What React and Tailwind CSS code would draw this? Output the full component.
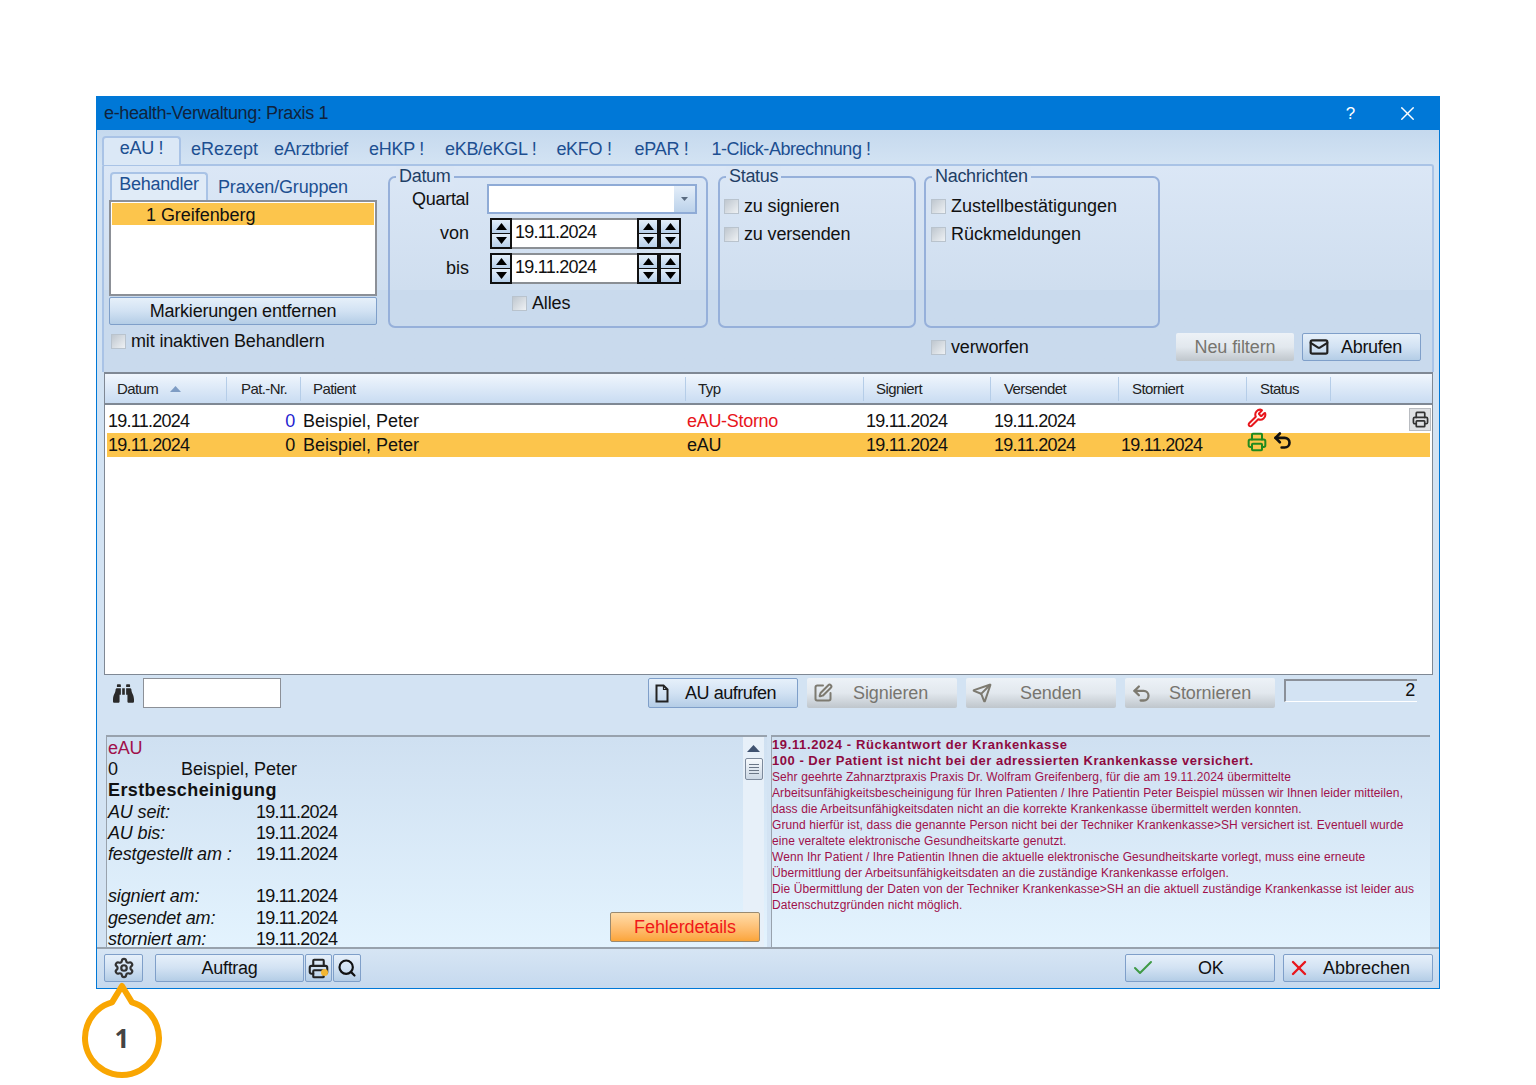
import { Settings, Printer, Search, Check, X, Mail, SquarePen, Send, Undo2, Wrench } from "lucide-react";
import { FaBinoculars } from "react-icons/fa";

const btn =
  "flex items-center border border-[#7f9fc9] rounded-[2px] bg-gradient-to-b from-[#e6f0fa] via-[#d2e2f3] to-[#b4cde6] text-[#111]";
const btnOff =
  "flex items-center rounded-[2px] bg-gradient-to-b from-[#edf2f7] via-[#e2e8ee] to-[#bfc6cc] text-[#77756f] tracking-[-0.1px]";
const date = "tracking-[-0.75px]";

const topTabs = [
  { label: "eRezept", cls: "ml-[10px] tracking-[0px]" },
  { label: "eArztbrief", cls: "ml-[16px]" },
  { label: "eHKP !", cls: "ml-[21px]" },
  { label: "eKB/eKGL !", cls: "ml-[21px]" },
  { label: "eKFO !", cls: "ml-[20px]" },
  { label: "ePAR !", cls: "ml-[23px]" },
  { label: "1-Click-Abrechnung !", cls: "ml-[23px] tracking-[-0.45px]" },
];

const header = [
  { label: "Datum", cls: "pl-[12px]", sort: true },
  { label: "Pat.-Nr.", cls: "pl-[14px]" },
  { label: "Patient", cls: "pl-[12px]" },
  { label: "Typ", cls: "pl-[12px]" },
  { label: "Signiert", cls: "pl-[12px]" },
  { label: "Versendet", cls: "pl-[13px]" },
  { label: "Storniert", cls: "pl-[13px]" },
  { label: "Status", cls: "pl-[13px]" },
];

const tableCols = "grid-cols-[122px_74px_385px_178px_127px_128px_128px_84px_1fr]";
const rowCols = "grid-cols-[119px_74px_385px_178px_127px_128px_128px_1fr]";

const infoRows = [
  ["AU seit:", "19.11.2024"],
  ["AU bis:", "19.11.2024"],
  ["festgestellt am :", "19.11.2024"],
  null,
  ["signiert am:", "19.11.2024"],
  ["gesendet am:", "19.11.2024"],
  ["storniert am:", "19.11.2024"],
];

const message = [
  "Sehr geehrte Zahnarztpraxis Praxis Dr. Wolfram Greifenberg, für die am 19.11.2024 übermittelte",
  "Arbeitsunfähigkeitsbescheinigung für Ihren Patienten / Ihre Patientin Peter Beispiel müssen wir Ihnen leider mitteilen,",
  "dass die Arbeitsunfähigkeitsdaten nicht an die korrekte Krankenkasse übermittelt werden konnten.",
  "Grund hierfür ist, dass die genannte Person nicht bei der Techniker Krankenkasse>SH versichert ist. Eventuell wurde",
  "eine veraltete elektronische Gesundheitskarte genutzt.",
  "Wenn Ihr Patient / Ihre Patientin Ihnen die aktuelle elektronische Gesundheitskarte vorlegt, muss eine erneute",
  "Übermittlung der Arbeitsunfähigkeitsdaten an die zuständige Krankenkasse erfolgen.",
  "Die Übermittlung der Daten von der Techniker Krankenkasse>SH an die aktuell zuständige Krankenkasse ist leider aus",
  "Datenschutzgründen nicht möglich.",
];

function Checkbox({ label, className = "" }) {
  return (
    <div className={`flex items-center h-[20px] text-[#111] tracking-[-0.15px] ${className}`}>
      <span className="w-[15px] h-[15px] border border-[#b9c3cd] bg-gradient-to-br from-[#bfc7cf] to-[#eef1f4] mr-[5px] shrink-0" />
      <span className="whitespace-nowrap">{label}</span>
    </div>
  );
}

function Triangle({ down }) {
  return (
    <svg width="11" height="7" viewBox="0 0 11 7">
      <path d={down ? "M0 0h11L5.5 7z" : "M0 7h11L5.5 0z"} fill="#000" />
    </svg>
  );
}

function Spin() {
  return (
    <div className="w-[22px] h-[31px] border-2 border-[#111] flex flex-col bg-[#111] gap-[1px] shrink-0">
      <div className="flex-1 bg-gradient-to-b from-[#e4effa] to-[#b8d0ea] flex items-center justify-center">
        <Triangle />
      </div>
      <div className="flex-1 bg-gradient-to-b from-[#e4effa] to-[#b8d0ea] flex items-center justify-center">
        <Triangle down />
      </div>
    </div>
  );
}

function DateRow({ label, className = "" }) {
  return (
    <div className={`flex items-center h-[31px] ${className}`}>
      <div className="w-[79px] text-right text-[#111] tracking-[0px]">{label}</div>
      <div className="ml-[21px] flex items-center">
        <Spin />
        <div className={`w-[125px] h-[31px] bg-white border-y-2 border-[#8b8f94] pl-[3px] leading-[25px] text-[#111] ${date}`}>
          19.11.2024
        </div>
        <Spin />
        <Spin />
      </div>
    </div>
  );
}

function Group({ title, className = "", children }) {
  return (
    <div className={`relative h-[152px] border-2 border-[#96b0da] rounded-[7px] shrink-0 ${className}`}>
      <div className="absolute left-[6px] top-[-12px] h-[20px] leading-[20px] px-[3px] bg-[#dae6f5] text-[#1f3f66]">
        {title}
      </div>
      {children}
    </div>
  );
}

function DocIcon() {
  return (
    <svg width="16" height="19" viewBox="0 0 16 19" fill="none" stroke="#222" strokeWidth="2">
      <path d="M2.5 1.5h7l4 4v12h-11z" />
      <path d="M9.5 1.5v4h4" strokeWidth="1.2" />
    </svg>
  );
}

export default function App() {
  return (
    <div className="relative w-[1536px] h-[1085px] bg-white pt-[96px] pl-[96px] overflow-hidden font-['Liberation_Sans',Arial,sans-serif] text-[18px] tracking-[-0.3px]">
      <div className="w-[1344px] h-[893px] flex flex-col border border-[#0078d7] bg-[#d3e3f3]">
        {/* titlebar */}
        <div className="h-[33px] shrink-0 bg-[#0078d7] flex items-center pl-[7px] text-[#10233c]">
          <span className="tracking-[-0.38px]">e-health-Verwaltung: Praxis 1</span>
          <span className="ml-auto text-white text-[17px]">?</span>
          <X className="ml-[41px] mr-[20px] text-white" size={23} strokeWidth={1.4} />
        </div>

        {/* tabs */}
        <div className="h-[34px] shrink-0 flex items-end pl-[5px] bg-gradient-to-b from-[#c5d9ee] to-[#d3e3f3] text-[#1d4f91]">
          <div className="w-[79px] h-[29px] border-x-2 border-t-2 border-[#a9c3e6] rounded-t-[4px] bg-[#dbe8f6] text-center leading-[20px] relative top-[1px] z-10">
            eAU !
          </div>
          {topTabs.map((t) => (
            <div key={t.label} className={`h-[29px] leading-[29px] whitespace-nowrap ${t.cls}`}>
              {t.label}
            </div>
          ))}
        </div>

        {/* filter panel */}
        <div className="h-[208px] shrink-0 ml-[5px] w-[1332px] flex border-t-2 border-x-2 border-[#a9c3e6] rounded-t-[3px] bg-gradient-to-b from-[#dbe7f6] from-0% via-[#cfdeef] via-60% to-[#c9daed] to-60% bg-[#c9daed]">
          <div className="w-[268px] ml-[5px] pt-[6px] shrink-0">
            <div className="flex h-[28px] items-end">
              <div className="ml-[1px] w-[98px] h-[28px] border-x-2 border-t-2 border-[#a9c3e6] rounded-t-[4px] bg-[#e0ebf7] text-[#1d4f91] text-center leading-[21px]">
                Behandler
              </div>
              <div className="ml-[10px] h-[26px] leading-[27px] text-[#1d4f91] tracking-[-0.15px]">Praxen/Gruppen</div>
            </div>
            <div className="h-[96px] bg-white border-2 border-[#8c9097] p-[1px]">
              <div className="h-[22px] bg-[#fcc54c] pl-[34px] leading-[24px] text-[#111] tracking-[-0.05px]">1 Greifenberg</div>
            </div>
            <div className={`${btn} mt-[1px] h-[28px] justify-center tracking-[-0.2px]`}>Markierungen entfernen</div>
            <Checkbox label="mit inaktiven Behandlern" className="mt-[6px] ml-[2px]" />
          </div>

          <div className="ml-[11px] w-[1033px] pt-[10px]">
            <div className="flex">
              <Group title="Datum" className="w-[320px]">
                <div className="pt-[6px]">
                  <div className="flex items-center h-[30px]">
                    <div className="w-[79px] text-right text-[#111]">Quartal</div>
                    <div className="ml-[18px] w-[210px] h-[30px] bg-white border-2 border-[#8fabd6] flex justify-end">
                      <div className="w-[21px] bg-gradient-to-b from-[#e4eef9] to-[#bcd2ea] flex items-center justify-center">
                        <svg width="7" height="4" viewBox="0 0 7 4">
                          <path d="M0 0h7L3.5 4z" fill="#5a6b80" />
                        </svg>
                      </div>
                    </div>
                  </div>
                  <DateRow label="von" className="mt-[4px]" />
                  <DateRow label="bis" className="mt-[4px]" />
                  <Checkbox label="Alles" className="mt-[9px] ml-[122px]" />
                </div>
              </Group>
              <Group title="Status" className="w-[198px] ml-[10px]">
                <div className="pt-[18px] pl-[4px]">
                  <Checkbox label="zu signieren" />
                  <Checkbox label="zu versenden" className="mt-[8px]" />
                </div>
              </Group>
              <Group title="Nachrichten" className="w-[236px] ml-[8px]">
                <div className="pt-[18px] pl-[5px]">
                  <Checkbox label="Zustellbestätigungen" className="tracking-[0px]" />
                  <Checkbox label="Rückmeldungen" className="mt-[8px] tracking-[0px]" />
                </div>
              </Group>
            </div>
            <div className="flex items-center mt-[5px] h-[28px]">
              <Checkbox label="verworfen" className="ml-[543px]" />
              <div className={`${btnOff} ml-auto w-[118px] h-[28px] justify-center text-[#8d8d88]`}>Neu filtern</div>
              <div className={`${btn} ml-[8px] w-[119px] h-[28px] pl-[6px]`}>
                <Mail size={20} strokeWidth={2.6} className="text-[#222]" />
                <span className="ml-[12px]">Abrufen</span>
              </div>
            </div>
          </div>
        </div>

        {/* table */}
        <div className="relative h-[303px] shrink-0 ml-[7px] w-[1329px] border border-[#7f8894] border-t-2 bg-white flex flex-col">
          <div className={`h-[31px] shrink-0 grid ${tableCols} items-center bg-gradient-to-b from-[#f0f6fd] to-[#c9dcf2] border-b-2 border-[#7f8894] text-[15px] tracking-[-0.6px] text-[#222]`}>
            {header.map((h) => (
              <div key={h.label} className={`h-[24px] leading-[24px] border-r border-[#b5cde8] flex items-center ${h.cls}`}>
                {h.label}
                {h.sort && (
                  <svg className="ml-[12px]" width="11" height="6" viewBox="0 0 11 6">
                    <path d="M0 6h11L5.5 0z" fill="#7e9cc4" />
                  </svg>
                )}
              </div>
            ))}
            <div />
          </div>

          <div className="pt-[4px] mx-[2px]">
            <div className={`h-[24px] leading-[24px] grid ${rowCols} items-center text-[#111]`}>
              <div className={`pl-[1px] ${date}`}>19.11.2024</div>
              <div className="text-right pr-[5px] text-[#1f1fd0]">0</div>
              <div className="pl-[3px] tracking-[0px]">Beispiel, Peter</div>
              <div className="pl-[2px] text-[#e8161c]">eAU-Storno</div>
              <div className={`pl-[3px] ${date}`}>19.11.2024</div>
              <div className={`pl-[4px] ${date}`}>19.11.2024</div>
              <div />
              <div className="pl-[1px] self-start -mt-[1px]">
                <Wrench size={20} strokeWidth={2.4} className="text-[#e8161c]" />
              </div>
            </div>
            <div className={`h-[24px] leading-[24px] grid ${rowCols} items-center bg-[#fcc54c] text-[#111]`}>
              <div className={`pl-[1px] ${date}`}>19.11.2024</div>
              <div className="text-right pr-[5px]">0</div>
              <div className="pl-[3px] tracking-[0px]">Beispiel, Peter</div>
              <div className="pl-[2px]">eAU</div>
              <div className={`pl-[3px] ${date}`}>19.11.2024</div>
              <div className={`pl-[4px] ${date}`}>19.11.2024</div>
              <div className={`pl-[3px] ${date}`}>19.11.2024</div>
              <div className="pl-[1px] self-start -mt-[1px] flex items-start gap-[5px]">
                <Printer size={20} strokeWidth={2.4} className="text-[#1f8a1f]" />
                <Undo2 size={21} strokeWidth={3} className="text-[#111] -mt-[2px]" />
              </div>
            </div>
          </div>

          {/* print button floating over the first row */}
          <div className="absolute left-[1304px] top-[34px] w-[22px] h-[23px] bg-[#dfe1e4] border border-[#b9bcc1] flex items-center justify-center">
            <Printer size={17} strokeWidth={2.4} className="text-[#333]" />
          </div>
        </div>

        {/* toolbar */}
        <div className="h-[60px] shrink-0 flex items-start pt-[3px]">
          <FaBinoculars className="ml-[16px] mt-[5px] text-[#2a2a2a]" size={21} />
          <div className="ml-[9px] w-[138px] h-[30px] bg-white border border-[#8c9097]" />
          <div className={`${btn} ml-[367px] w-[150px] h-[30px] pl-[5px]`}>
            <DocIcon />
            <span className="ml-[15px] tracking-[-0.45px]">AU aufrufen</span>
          </div>
          <div className={`${btnOff} ml-[9px] w-[150px] h-[30px] pl-[6px]`}>
            <SquarePen size={20} strokeWidth={2.4} className="text-[#7d7a70]" />
            <span className="ml-[20px]">Signieren</span>
          </div>
          <div className={`${btnOff} ml-[9px] w-[150px] h-[30px] pl-[6px]`}>
            <Send size={20} strokeWidth={2.4} className="text-[#7d7a70]" />
            <span className="ml-[28px]">Senden</span>
          </div>
          <div className={`${btnOff} ml-[9px] w-[150px] h-[30px] pl-[6px]`}>
            <Undo2 size={21} strokeWidth={2.6} className="text-[#7d7a70]" />
            <span className="ml-[17px]">Stornieren</span>
          </div>
          <div className="ml-[9px] mt-[1px] w-[133px] h-[23px] border-t-2 border-l-2 border-[#8a9099] border-b border-b-white text-right pr-[2px] leading-[19px] text-[#111]">
            2
          </div>
        </div>

        {/* info panels */}
        <div className="h-[212px] shrink-0 flex pl-[9px]">
          <div className="relative w-[661px] h-[212px] border-t-2 border-l border-[#98a2ad] bg-gradient-to-b from-[#cfe0f1] to-[#e3f3fe] flex">
            <div className="w-[637px] pl-[1px] pt-[1px] text-[#111] leading-[21.2px]">
              <div className="text-[#a0104a]">eAU</div>
              <div className="flex">
                <span className="w-[73px]">0</span>
                <span className="tracking-[0px]">Beispiel, Peter</span>
              </div>
              <div className="font-bold tracking-[0.4px]">Erstbescheinigung</div>
              {infoRows.map((r, i) =>
                r ? (
                  <div key={i} className="flex">
                    <span className="w-[148px] italic tracking-[-0.15px]">{r[0]}</span>
                    <span className={date}>{r[1]}</span>
                  </div>
                ) : (
                  <div key={i} className="h-[21.2px]" />
                )
              )}
            </div>
            <div className="w-[21px] ml-[-1px] bg-[#e7f0f9] flex flex-col items-center pt-[8px]">
              <svg width="13" height="7" viewBox="0 0 13 7">
                <path d="M0 7h13L6.5 0z" fill="#3f5270" />
              </svg>
              <div className="mt-[6px] w-[18px] h-[22px] border border-[#7d8a9c] rounded-[2px] bg-gradient-to-b from-[#f6f9fc] to-[#ccd8e5] flex flex-col items-center justify-center gap-[2px]">
                <span className="w-[10px] h-[1px] bg-[#6a7686]" />
                <span className="w-[10px] h-[1px] bg-[#6a7686]" />
                <span className="w-[10px] h-[1px] bg-[#6a7686]" />
                <span className="w-[10px] h-[1px] bg-[#6a7686]" />
              </div>
            </div>
            <div className="absolute left-[503px] top-[175px] w-[150px] h-[30px] border border-[#9a8a70] rounded-[2px] bg-gradient-to-b from-[#ffdca8] to-[#fba538] flex items-center justify-center text-[#f01818] tracking-[-0.1px]">
              Fehlerdetails
            </div>
          </div>
          <div className="ml-[4px] w-[659px] h-[212px] border-t-2 border-l border-[#98a2ad] bg-gradient-to-b from-[#cfe0f1] to-[#e3f3fe] overflow-hidden text-[#a0104a] text-[12px] leading-[16px] tracking-[0.09px]">
            <div className="font-bold text-[13px] text-[#8e0a40] tracking-[0.62px]">19.11.2024 - Rückantwort der Krankenkasse</div>
            <div className="font-bold text-[13px] text-[#8e0a40] tracking-[0.52px]">100 - Der Patient ist nicht bei der adressierten Krankenkasse versichert.</div>
            {message.map((line) => (
              <div key={line} className="whitespace-nowrap">
                {line}
              </div>
            ))}
          </div>
        </div>

        {/* footer */}
        <div className="h-[41px] shrink-0 flex items-start pt-[5px] pl-[7px] border-t-2 border-[#98a2ad] bg-gradient-to-b from-[#d6e5f4] to-[#c6d9ee]">
          <div className={`${btn} w-[39px] h-[28px] justify-center`}>
            <Settings size={22} strokeWidth={2.4} className="text-[#333]" />
          </div>
          <div className={`${btn} ml-[12px] w-[149px] h-[28px] justify-center`}>Auftrag</div>
          <div className={`${btn} relative ml-[1px] w-[27px] h-[28px] justify-center`}>
            <Printer size={21} strokeWidth={2.4} className="text-[#222]" />
            <span className="absolute right-[3px] bottom-[5px] w-[7px] h-[7px] rounded-full bg-[#f2b632]" />
          </div>
          <div className={`${btn} ml-[1px] w-[28px] h-[28px] justify-center`}>
            <Search size={20} strokeWidth={2.6} className="text-[#111]" />
          </div>
          <div className={`${btn} ml-auto w-[150px] h-[28px] pl-[5px]`}>
            <Check size={24} strokeWidth={2} className="text-[#3f9a45]" />
            <span className="ml-[43px]">OK</span>
          </div>
          <div className={`${btn} ml-[8px] mr-[6px] w-[150px] h-[28px] pl-[3px]`}>
            <X size={24} strokeWidth={2.4} className="text-[#e8161c]" />
            <span className="ml-[12px] tracking-[0px]">Abbrechen</span>
          </div>
        </div>
      </div>

      {/* callout marker */}
      <svg className="absolute left-[70px] top-[980px] w-[110px] h-[105px]" viewBox="70 980 110 105" fill="#fff">
        <path d="M122 986 L132 1002.4 A37 37 0 1 1 112 1002.4 Z" stroke="#f9a602" strokeWidth="6" strokeLinejoin="round" />
      </svg>
      <div className="absolute left-[102px] top-[1020px] w-[40px] h-[36px] text-center font-['Noto_Sans',sans-serif] font-bold text-[26px] leading-[36px] tracking-normal text-[#444]">
        1
      </div>
    </div>
  );
}
